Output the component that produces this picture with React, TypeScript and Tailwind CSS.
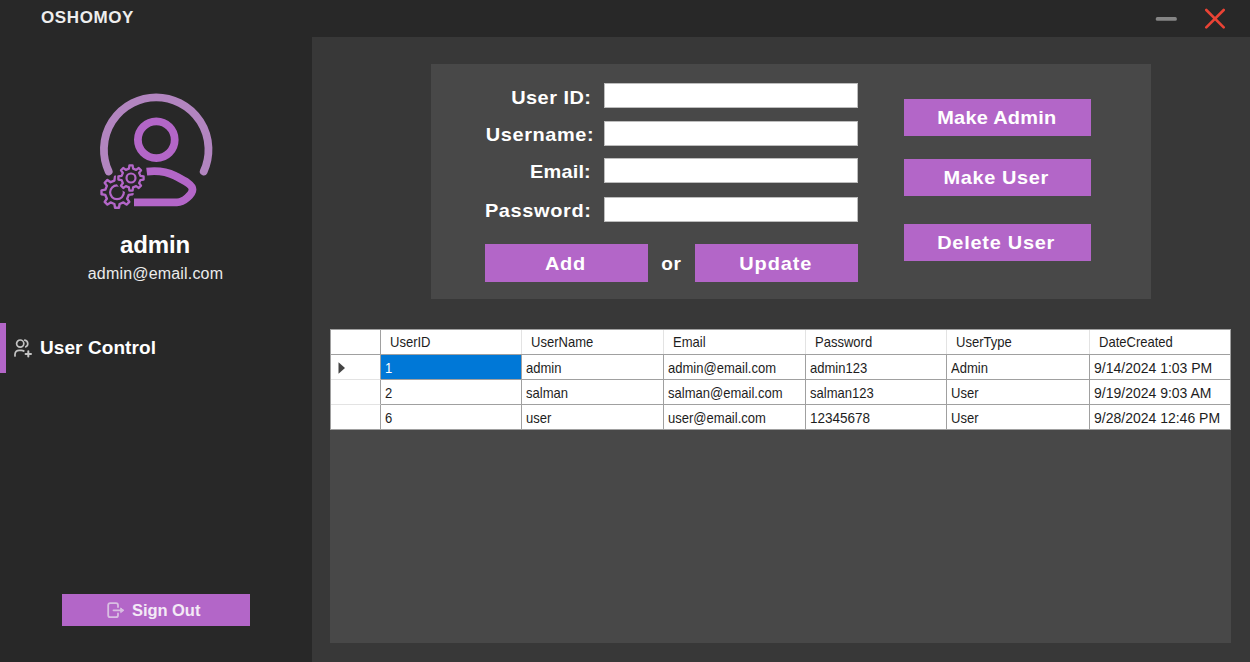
import React from "react";

type TextItem = { text: string; cls?: string };

const fields: { label: string; gap: string; pad: string; tracking: string }[] = [
  { label: "User ID:", gap: "mb-[13px]", pad: "pr-[13px] pt-[3px]", tracking: "tracking-[0.45px]" },
  { label: "Username:", gap: "mb-[12px]", pad: "pr-[10px] pt-[1px]", tracking: "tracking-[0.55px]" },
  { label: "Email:", gap: "mb-[14px]", pad: "pr-[13px] pt-[2px]", tracking: "tracking-[0.15px]" },
  { label: "Password:", gap: "", pad: "pr-[13px] pt-[2px]", tracking: "tracking-[0.6px]" },
];

const headers = ["UserID", "UserName", "Email", "Password", "UserType", "DateCreated"];

const narrow = "scale-x-[0.868]";
const date = "scale-x-[0.933]";
const rows: TextItem[][] = [
  [{ text: "1" }, { text: "admin" }, { text: "admin@email.com" }, { text: "admin123" }, { text: "Admin" }, { text: "9/14/2024 1:03 PM", cls: date }],
  [{ text: "2" }, { text: "salman" }, { text: "salman@email.com" }, { text: "salman123" }, { text: "User" }, { text: "9/19/2024 9:03 AM", cls: date }],
  [{ text: "6" }, { text: "user" }, { text: "user@email.com" }, { text: "12345678", cls: "scale-x-[0.9]" }, { text: "User" }, { text: "9/28/2024 12:46 PM", cls: date }],
];

const columns = "grid grid-cols-[50px_141px_142px_142px_141px_143px_141px]";

function gearPath(cx: number, cy: number, outer: number, inner: number, offset: number) {
  const points: string[] = [];
  const step = (Math.PI * 2) / 8;
  for (let i = 0; i < 8; i++) {
    const a = i * step + offset;
    const at = (r: number, d: number) =>
      `${(cx + r * Math.cos(a + d * step)).toFixed(2)} ${(cy + r * Math.sin(a + d * step)).toFixed(2)}`;
    points.push(at(inner, -0.28), at(outer, -0.16), at(outer, 0.16), at(inner, 0.28));
  }
  return `M${points.join("L")}Z`;
}

function Avatar() {
  return (
    <svg width="120" height="120" viewBox="96 90 120 120" fill="none">
      <path d="M108.7 171.5A52.3 52.3 0 1 1 203.7 171.5" stroke="#b285c0" strokeWidth="7.8" strokeLinecap="round" />
      <circle cx="156.3" cy="139.7" r="18.4" stroke="#b366c8" strokeWidth="7.8" />
      <path
        d="M146.7 171.6C158 170.2 166 171.3 175 175.8C183 180 192.5 184.5 192.5 189.5C192.5 194 184 202.3 177 202.3H134"
        stroke="#b366c8"
        strokeWidth="7.8"
      />
      <path d={gearPath(117, 192.3, 15.6, 12, 0)} stroke="#b366c8" strokeWidth="2.4" strokeLinejoin="round" />
      <circle cx="117" cy="192.3" r="6.9" stroke="#b366c8" strokeWidth="2.2" />
      <circle cx="131" cy="178" r="15.2" fill="#282828" />
      <path d={gearPath(131, 178, 12.7, 9.6, 0)} stroke="#b366c8" strokeWidth="2.3" strokeLinejoin="round" />
      <circle cx="131" cy="178" r="4.5" stroke="#b366c8" strokeWidth="2.2" />
    </svg>
  );
}

function UsersIcon() {
  return (
    <svg width="19" height="19" viewBox="0 0 19 19" fill="none" stroke="#c4c4c4" strokeWidth="1.7" strokeLinecap="round">
      <circle cx="6.2" cy="4.6" r="3.6" />
      <path d="M10.8 1.2A3.5 3.5 0 0 1 11.8 7.8" />
      <path d="M1 17V15.2A4.2 4.2 0 0 1 5.2 11.3H7.4Q8.9 11.3 9.8 12" />
      <path d="M14.3 12.2V17.6M11.6 14.9H17" strokeWidth="2" />
    </svg>
  );
}

function SignOutIcon() {
  return (
    <svg width="18" height="17" viewBox="0 0 18 17" fill="none" stroke="#d9bfe2" strokeWidth="1.8" strokeLinecap="round" strokeLinejoin="round">
      <path d="M11 5V3.3Q11 1.2 9 1.2H3.3Q1.2 1.2 1.2 3.3V13.2Q1.2 15.2 3.3 15.2H9Q11 15.2 11 13.2V11.5" />
      <path d="M6.5 8.3H16" />
      <path d="M14 6.2L16.6 8.3L14 10.4Z" fill="#d9bfe2" strokeWidth="1" />
    </svg>
  );
}

function Button({ children, className }: { children: React.ReactNode; className: string }) {
  return (
    <button className={`flex items-center justify-center bg-[#b366c8] pr-[2px] text-[19px] font-bold text-white ${className}`}>
      <span className="inline-block scale-x-[1.05] whitespace-nowrap">{children}</span>
    </button>
  );
}

export default function App() {
  return (
    <div className="flex h-[662px] w-[1250px] flex-col overflow-hidden bg-[#282828] font-['Liberation_Sans',Arial,sans-serif] text-white">
      <header className="flex h-[37px] shrink-0 items-center justify-between pl-[41px] pr-[25px]">
        <h1 className="pb-[2px] text-[17px] font-bold leading-none tracking-[0.6px] text-[#eeeeee]">OSHOMOY</h1>
        <div className="flex items-center gap-[27px]">
          <svg width="22" height="22" viewBox="0 0 22 22">
            <rect x="0.8" y="9" width="21" height="3.8" rx="1.5" fill="#858585" />
          </svg>
          <svg width="21" height="21" viewBox="0 0 21 21" stroke="#ea4335" strokeWidth="2.6" strokeLinecap="round">
            <path d="M2.3 2L19.7 19.4M19.7 2L2.3 19.4" />
          </svg>
        </div>
      </header>

      <div className="flex min-h-0 flex-1">
        <aside className="flex w-[312px] shrink-0 flex-col">
          <div className="flex flex-col items-center pt-[53px]">
            <Avatar />
            <h2 className="mt-[21px] pr-[2px] text-[24px] font-bold leading-[28px] tracking-[-0.1px]">admin</h2>
            <p className="mt-[5px] pr-[1px] text-[16px] leading-[20px] tracking-[0.18px] text-[#ececec]">admin@email.com</p>
          </div>
          <nav className="mt-[39px] flex h-[50px] items-center">
            <span className="h-[50px] w-[6px] bg-[#b366c8]" />
            <span className="ml-[8px]">
              <UsersIcon />
            </span>
            <span className="ml-[7px] pb-[2px] text-[19px] font-bold leading-none tracking-[0.08px]">User Control</span>
          </nav>
          <button className="mb-[36px] ml-[62px] mt-auto flex h-[32px] w-[188px] items-center bg-[#b366c8] pl-[45px] text-[16.5px] font-bold text-[#f3eaf6]">
            <SignOutIcon />
            <span className="ml-[7px] tracking-[-0.05px]">Sign Out</span>
          </button>
        </aside>

        <main className="flex flex-1 flex-col bg-[#383838]">
          <section className="ml-[119px] mt-[27px] flex h-[235px] w-[720px] bg-[#484848] pl-[54px] pt-[19px]">
            <div className="w-[373px]">
              {fields.map((f) => (
                <div key={f.label} className={`flex h-[25px] items-center ${f.gap}`}>
                  <label className={`flex w-[119px] shrink-0 justify-end text-[19px] font-bold leading-none ${f.pad}`}>
                    <span className={`inline-block origin-right scale-x-[1.05] whitespace-nowrap ${f.tracking}`}>{f.label}</span>
                  </label>
                  <input className="h-[25px] w-[254px] border border-[#bdbdbd] bg-white px-1 text-base text-black outline-none" />
                </div>
              ))}
              <div className="mt-[22px] flex items-center">
                <Button className="h-[38px] w-[163px] pt-[2px] tracking-[0.6px]">Add</Button>
                <span className="w-[47px] pt-[2px] text-center text-[19px] font-bold tracking-[0.7px]">or</span>
                <Button className="h-[38px] w-[163px] pt-[2px] tracking-[0.85px]">Update</Button>
              </div>
            </div>
            <div className="ml-[46px] flex flex-col pt-[16px]">
              <Button className="h-[37px] w-[187px] pt-[2px] tracking-[0.25px]">Make Admin</Button>
              <Button className="mt-[23px] h-[37px] w-[187px] pt-[2px] tracking-[0.6px]">Make User</Button>
              <Button className="mt-[28px] h-[37px] w-[187px] pt-[2px] tracking-[0.7px]">Delete User</Button>
            </div>
          </section>

          <section className="ml-[18px] mt-[30px] h-[314px] w-[901px] bg-[#484848] text-[15px] leading-[25px] text-[#1d1d1d]">
            <div className={`${columns} h-[26px] border border-[#a0a0a0] bg-white leading-[24px]`}>
              <span className="border-r border-[#a0a0a0]" />
              {headers.map((h) => (
                <span key={h} className="h-[24px] border-r border-[#e3e3e3] pl-[9px] last:border-0">
                  <span className={`inline-block origin-left ${narrow}`}>{h}</span>
                </span>
              ))}
            </div>
            {rows.map((row, r) => (
              <div key={row[0].text} className={`${columns} h-[25px] border-x border-[#a0a0a0] bg-white`}>
                <span className={`flex h-[25px] items-center border-b border-r border-r-[#a0a0a0] pl-[7px] pt-px ${r === 2 ? "border-b-[#a0a0a0]" : "border-b-[#e3e3e3]"}`}>
                  {r === 0 && (
                    <svg width="8" height="12" viewBox="0 0 8 12">
                      <path d="M0.5 0.3L7 6L0.5 11.7Z" fill="#444444" />
                    </svg>
                  )}
                </span>
                {row.map((cell, c) => (
                  <span
                    key={c}
                    className={`h-[25px] whitespace-nowrap border-b border-r border-[#a0a0a0] pl-[4px] last:border-r-0 ${r === 0 && c === 0 ? "bg-[#0078d7] text-white" : ""}`}
                  >
                    <span className={`inline-block origin-left ${cell.cls ?? narrow}`}>{cell.text}</span>
                  </span>
                ))}
              </div>
            ))}
          </section>
        </main>
      </div>
    </div>
  );
}
